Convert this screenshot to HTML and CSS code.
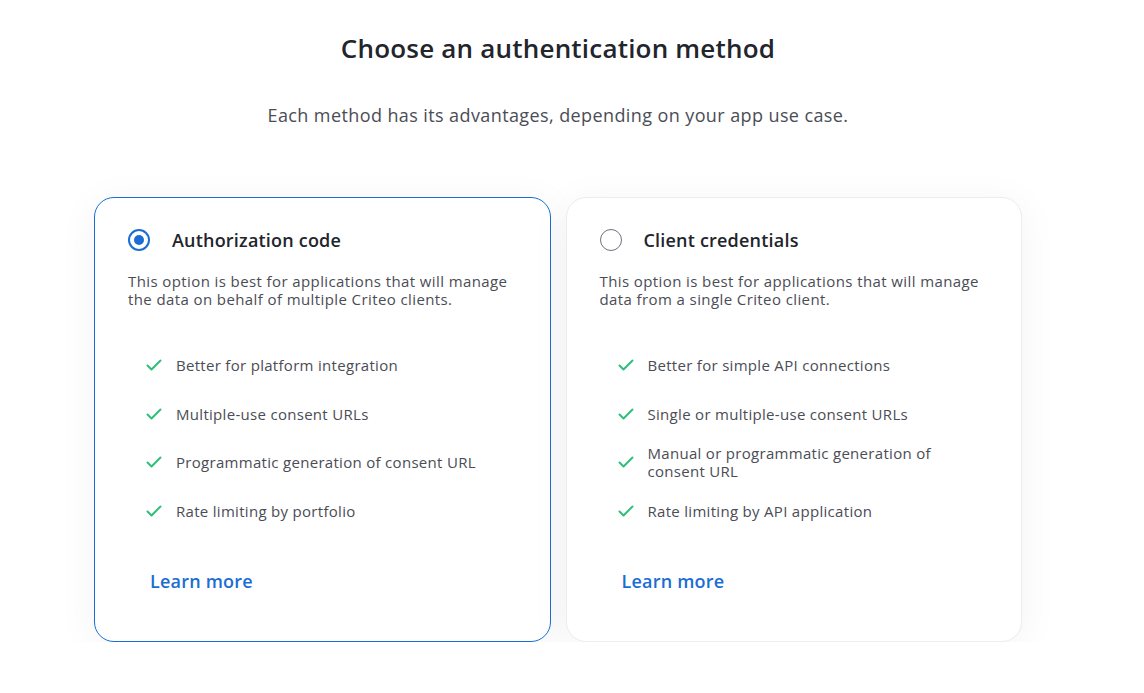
FILE: index.html
```html
<!DOCTYPE html>
<html lang="en">
<head>
  <meta charset="UTF-8">
  <title>Choose an authentication method</title>
  <link rel="stylesheet" href="styles.css">
</head>
<body>

  <div class="page">
    <h1 class="title">Choose an authentication method</h1>
    <p class="subtitle">Each method has its advantages, depending on your app use case.</p>

    <div class="methods">
      <div class="card selected">
        <div class="card-head">
          <span class="radio"></span>
          <h2>Authorization code</h2>
        </div>
        <p class="desc">This option is best for applications that will manage the data on behalf of multiple Criteo clients.</p>
        <ul class="features">
          <li><svg class="check" viewBox="0 0 16 12"><path d="M1.5 6.5l4 4L14.5 1.5"/></svg><span>Better for platform integration</span></li>
          <li><svg class="check" viewBox="0 0 16 12"><path d="M1.5 6.5l4 4L14.5 1.5"/></svg><span>Multiple-use consent URLs</span></li>
          <li><svg class="check" viewBox="0 0 16 12"><path d="M1.5 6.5l4 4L14.5 1.5"/></svg><span>Programmatic generation of consent URL</span></li>
          <li><svg class="check" viewBox="0 0 16 12"><path d="M1.5 6.5l4 4L14.5 1.5"/></svg><span>Rate limiting by portfolio</span></li>
        </ul>
        <a class="learn" href="#">Learn more</a>
      </div>

      <div class="card">
        <div class="card-head">
          <span class="radio"></span>
          <h2>Client credentials</h2>
        </div>
        <p class="desc">This option is best for applications that will manage data from a single Criteo client.</p>
        <ul class="features">
          <li><svg class="check" viewBox="0 0 16 12"><path d="M1.5 6.5l4 4L14.5 1.5"/></svg><span>Better for simple API connections</span></li>
          <li><svg class="check" viewBox="0 0 16 12"><path d="M1.5 6.5l4 4L14.5 1.5"/></svg><span>Single or multiple-use consent URLs</span></li>
          <li><svg class="check" viewBox="0 0 16 12"><path d="M1.5 6.5l4 4L14.5 1.5"/></svg><span>Manual or programmatic generation of consent URL</span></li>
          <li><svg class="check" viewBox="0 0 16 12"><path d="M1.5 6.5l4 4L14.5 1.5"/></svg><span>Rate limiting by API application</span></li>
        </ul>
        <a class="learn" href="#">Learn more</a>
      </div>
    </div>
  </div>

</body>
</html>
```

FILE: styles.css
```css
body {
  margin: 0;
  background: #fff;
  font-family: "Open Sans", Lato, sans-serif;
  color: #4a4d55;
}

.page {
  width: 928px;
  margin-left: 94px;
  padding-top: 30px;
}

.title {
  margin: 0;
  text-align: center;
  font-size: 26px;
  font-weight: 600;
  letter-spacing: 0.2px;
  color: #22252b;
  line-height: 36px;
}

.subtitle {
  margin: 37px 0 0;
  text-align: center;
  font-size: 18px;
  line-height: 24px;
  letter-spacing: 0.4px;
  color: #4a4d55;
}

.methods {
  display: grid;
  grid-template-columns: 1fr 1fr;
  gap: 15px;
  margin-top: 70px;
}

.card {
  height: 445px;
  box-sizing: border-box;
  border: 1px solid #ececf1;
  border-radius: 20px;
  background: #fff;
  padding: 31px 33px 0;
  box-shadow: 0 6px 40px rgba(30, 35, 60, 0.05);
}

.card.selected {
  border-color: #1a6dd3;
}

.card-head {
  display: flex;
  align-items: center;
  gap: 22px;
  height: 22px;
}

.radio {
  width: 22px;
  height: 22px;
  box-sizing: border-box;
  border: 1.5px solid #6f737c;
  border-radius: 50%;
  display: flex;
  align-items: center;
  justify-content: center;
}

.selected .radio {
  border: 2px solid #1a6dd3;
}

.selected .radio::after {
  content: "";
  width: 10px;
  height: 10px;
  border-radius: 50%;
  background: #1a6dd3;
}

.card-head h2 {
  margin: 0;
  font-size: 18px;
  font-weight: 600;
  letter-spacing: 0.2px;
  color: #22252b;
}

.desc {
  margin: 21px 0 0;
  font-size: 15px;
  line-height: 18px;
  letter-spacing: 0.4px;
  color: #4a4d55;
}

.features {
  list-style: none;
  margin: 39px 0 0;
  padding: 0 0 0 18px;
  display: flex;
  flex-direction: column;
  gap: 12.5px;
}

.features li {
  display: flex;
  align-items: center;
  gap: 14px;
  min-height: 36px;
  font-size: 15px;
  line-height: 18px;
  letter-spacing: 0.3px;
}

.check {
  width: 16px;
  height: 12px;
  flex-shrink: 0;
  fill: none;
  stroke: #2fbf7a;
  stroke-width: 2;
  stroke-linecap: round;
  stroke-linejoin: round;
}

.learn {
  display: inline-block;
  margin: 40px 0 0 22px;
  font-size: 18px;
  font-weight: 600;
  letter-spacing: 0.2px;
  color: #1a6dd3;
  text-decoration: none;
}
```
